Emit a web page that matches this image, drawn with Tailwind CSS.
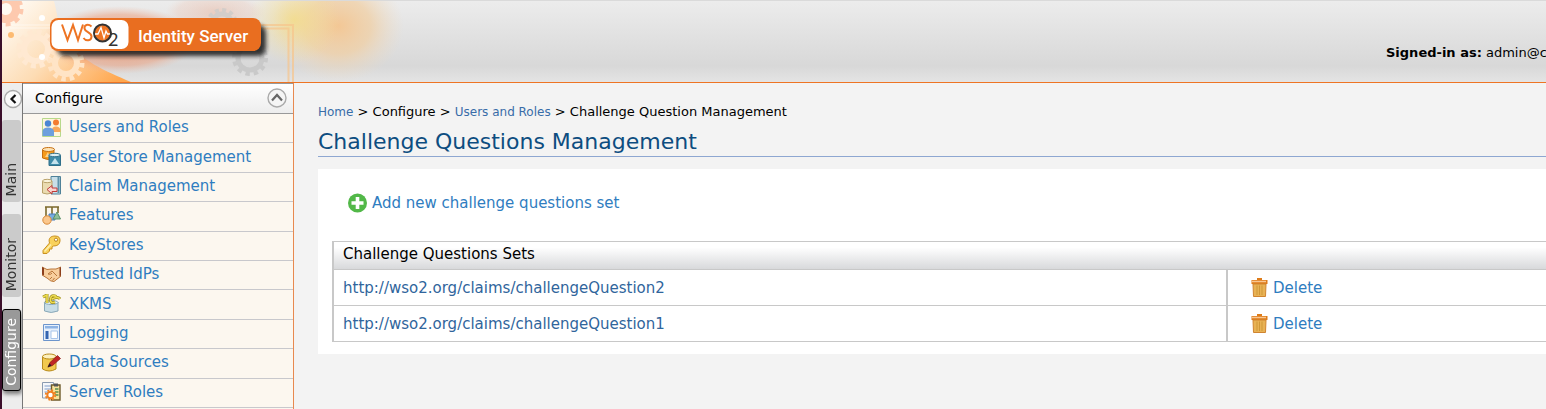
<!DOCTYPE html>
<html lang="en">
<head>
<meta charset="utf-8">
<title>WSO2 Identity Server</title>
<script src="https://cdn.jsdelivr.net/npm/@tailwindcss/browser@4"></script>
</head>
<body class="flex h-screen flex-col overflow-hidden border-l-2 border-[#3b0f2b] bg-[#f3f3f3] font-['DejaVu_Sans',sans-serif] text-sm text-black">

<header class="relative flex h-[83px] shrink-0 items-center overflow-hidden border-t border-b border-t-[#dadada] border-b-[#ee7423] bg-linear-to-b from-[#ececec] via-[#d8d8d8] via-80% to-[#e4e4e4]">
  <svg class="absolute left-0 top-0" width="420" height="82" viewBox="2 1 420 82" aria-hidden="true">
    <defs>
      <linearGradient id="swoosh" x1="0" x2="1" y1="0.2" y2="0.8">
        <stop offset="0" stop-color="#fffaf3"/><stop offset=".5" stop-color="#fddcb4"/><stop offset="1" stop-color="#ffa850"/>
      </linearGradient>
      <radialGradient id="yellow"><stop offset="0" stop-color="#f4dc84" stop-opacity=".8"/><stop offset="1" stop-color="#f4dc94" stop-opacity="0"/></radialGradient>
      <radialGradient id="peach"><stop offset="0" stop-color="#f3c795"/><stop offset=".5" stop-color="#f0cfa4" stop-opacity=".75"/><stop offset="1" stop-color="#eedcc4" stop-opacity="0"/></radialGradient>
      <radialGradient id="glow"><stop offset="0" stop-color="#e87848" stop-opacity=".8"/><stop offset=".75" stop-color="#ee9c78" stop-opacity=".5"/><stop offset="1" stop-color="#f0b8a0" stop-opacity="0"/></radialGradient>
      <filter id="soft" x="-10%" y="-50%" width="120%" height="200%"><feGaussianBlur stdDeviation="2"/></filter>
    </defs>
    <path d="M2 1H54C58 16 58 28 66 40C80 60 105 71 131 82H2Z" fill="url(#swoosh)"/>
    <ellipse cx="215" cy="12" rx="50" ry="20" fill="url(#glow)" opacity=".3"/>
    <ellipse cx="338" cy="26" rx="66" ry="56" fill="url(#peach)"/>
    <ellipse cx="294" cy="20" rx="46" ry="44" fill="url(#yellow)"/>
    <ellipse cx="120" cy="40" rx="78" ry="34" fill="url(#glow)"/>
    <g fill="none">
      <circle cx="6" cy="9" r="10" stroke="#fdc9ae" stroke-width="8"/>
      <circle cx="6" cy="9" r="15" stroke="#fdc9ae" stroke-width="5" stroke-dasharray="5 4.4"/>
      <circle cx="36" cy="49" r="12" stroke="#ffe9d2" stroke-width="6"/>
      <circle cx="36" cy="49" r="17" stroke="#ffe9d2" stroke-width="5" stroke-dasharray="5 3.9"/>
      <circle cx="66" cy="63" r="11" stroke="#ffe4c6" stroke-width="6"/>
      <circle cx="66" cy="63" r="16" stroke="#ffe4c6" stroke-width="5" stroke-dasharray="4.4 4"/>
      <circle cx="222" cy="24" r="10" stroke="#d3cdc9" stroke-width="5"/>
      <circle cx="222" cy="24" r="14" stroke="#d3cdc9" stroke-width="4" stroke-dasharray="4 3.3"/>
      <circle cx="250" cy="58" r="12" stroke="#c9c9c9" stroke-width="5"/>
      <circle cx="250" cy="58" r="16" stroke="#c9c9c9" stroke-width="4" stroke-dasharray="4.4 4"/>
      <path d="M255 25H293V82M255 28.500H288.500V82" stroke="#f6c48c" stroke-opacity=".7" stroke-width="2"/>
      <path d="M10 25H50M10 28H50" stroke="#fff" stroke-opacity=".5"/>
    </g>
    <circle cx="11" cy="35" r="3" fill="#fdbb72"/>
    <circle cx="42" cy="18" r="3" fill="#fff"/>
    <circle cx="42" cy="57" r="3" fill="#fff"/>
    <rect x="57" y="25" width="209" height="31" rx="8" fill="#222" opacity=".9" filter="url(#soft)"/>
    <rect x="50" y="18" width="211" height="33" rx="8" fill="#e96e20"/>
    <rect x="51.500" y="20" width="77" height="29" rx="7" fill="#fff"/>
    <path d="M62 24.500L67.500 40L73 25L78 40L83 24.500" fill="none" stroke="#ee7423" stroke-width="2"/>
    <path d="M91.500 26.500C88 23.500 84 25 84.500 28.500C85 32.500 91.500 32 91.500 36.500C91.500 41 86 41.500 83.500 38" fill="none" stroke="#ee7423" stroke-width="2"/>
    <circle cx="102.500" cy="33" r="8.500" fill="#ee7423" stroke="#333" stroke-width="2"/>
    <path d="M95 34H98L101 27.500L104 38L106 31L107.500 34H110" fill="none" stroke="#fff" stroke-width="1.300"/>
    <text x="108" y="46" font-family="Lato, sans-serif" font-size="18" fill="#333">2</text>
    <text x="138" y="42" font-family="Roboto, sans-serif" font-weight="500" font-size="17" fill="#fff">Identity Server</text>
  </svg>
  <p class="ml-auto mt-6 w-40 shrink-0 overflow-hidden whitespace-nowrap text-[13px]"><b>Signed-in as:</b> admin@c</p>
</header>

<div class="flex min-h-0 flex-1">
  <nav class="flex w-5 shrink-0 flex-col items-start bg-[#ededed] pt-[6px]" aria-label="Sections">
    <button aria-label="Collapse menu">
      <svg class="block" width="20" height="20" viewBox="0 0 20 20"><circle cx="11" cy="10" r="8.500" fill="#fafafa" stroke="#aaa" stroke-width="1.400"/><path d="M13.500 6L9.500 10L13.500 14" fill="none" stroke="#111" stroke-width="2.200"/></svg>
    </button>
    <button class="mt-[11px] flex h-[82px] w-[19px] items-center justify-end rounded-[3px] bg-[#cbcbcb] pb-[6px] text-[#333] [writing-mode:vertical-rl]"><span class="block rotate-180 leading-[17px]">Main</span></button>
    <button class="mt-3 flex h-[83px] w-[19px] items-center justify-end rounded-[3px] bg-[#cbcbcb] pb-[6px] text-[#333] [writing-mode:vertical-rl]"><span class="block rotate-180 leading-[17px]">Monitor</span></button>
    <button class="mt-3 flex h-[82px] w-[19px] items-center justify-end rounded-[3px] border border-black bg-[#999] pb-1 text-white shadow-[1px_3px_4px_#777] [writing-mode:vertical-rl]"><span class="block rotate-180 leading-[17px]">Configure</span></button>
  </nav>

  <aside class="w-[272px] shrink-0 border-l border-r border-l-[#777] border-r-[#e8894f] bg-[#fcf7ef]">
    <div class="flex h-[31px] items-center justify-between border-t border-b border-t-[#999] border-b-[#999] bg-linear-to-b from-white to-[#ededed] pr-[6px] pb-px pl-3">
      <h2>Configure</h2>
      <button aria-label="Collapse Configure">
        <svg class="block" width="20" height="20" viewBox="0 0 20 20"><circle cx="10" cy="10" r="9" fill="#f5f5f5" stroke="#aaa" stroke-width="1.400"/><path d="M5 12.500L10 7L15 12.500" fill="none" stroke="#666" stroke-width="2.200"/></svg>
      </button>
    </div>
    <ul class="grid h-[294px] auto-rows-fr text-[15px] leading-5 text-[#2f7dc0] *:flex *:items-center *:gap-2 *:border-b *:border-[#c8c8cc] *:pb-[2px] *:pl-[19px]">
      <li>
        <svg width="19" height="19" viewBox="0 0 19 19"><path d="M.5.500H18.500V18.500H.5Z" fill="#fdf6dc" stroke="#b7d98b"/><circle cx="14" cy="4.500" r="3" fill="#f47c30"/><path d="M10 12Q10 8.500 14 8.500T18.500 12V14H10Z" fill="#f9a95c"/><circle cx="6" cy="5.500" r="3.200" fill="#4a86d4"/><path d="M.5 18V13Q1 9.500 6 9.500T12 13V18Z" fill="#6d9fdd"/></svg>
        <a href="#">Users and Roles</a></li>
      <li>
        <svg width="19" height="20" viewBox="0 0 19 20"><path d="M.5 2.500V11Q6 14 12 11V2.500" fill="#f59a1b" stroke="#c66f10"/><ellipse cx="6.500" cy="2.500" rx="6" ry="2" fill="#fde3b5" stroke="#c66f10"/><path d="M3 10L6 5L8 10Z" fill="#fdd28a"/><path d="M7 8V18.500H18.500V8" fill="#3f8ba8" stroke="#2f6f8a"/><ellipse cx="12.700" cy="8" rx="5.800" ry="1.700" fill="#dceef4" stroke="#2f6f8a"/><path d="M9 17L13 11L17 17Z" fill="#c4e2ec"/></svg>
        <a href="#">User Store Management</a></li>
      <li>
        <svg width="19" height="19" viewBox="0 0 19 19"><path d="M9 .5H18.500V18H9Z" fill="#c9dfe8" stroke="#4f8198"/><path d="M16.500 1V17" stroke="#5d93ab" stroke-width="2"/><path d="M.5 5V17Q5 19 10 17V5" fill="#eadbb0" stroke="#b9a26a"/><ellipse cx="5.200" cy="5" rx="4.700" ry="1.700" fill="#faf3da" stroke="#b9a26a"/><path d="M5 13.500L10 9.500V12H15V15.500H10V18Z" fill="#fbd5d0" stroke="#c03a3a"/></svg>
        <a href="#">Claim Management</a></li>
      <li>
        <svg width="19" height="19" viewBox="0 0 19 19"><path d="M4 11V1H16V7M10 1V8M3 1H17" fill="none" stroke="#7c6a2c" stroke-width="1.600"/><path d="M7 8H13V14H7Z" fill="#78ace0" stroke="#4a7fc0"/><path d="M11 13L15 6L18.500 13Z" fill="#8fbf9a" stroke="#5b9068"/><circle cx="5" cy="14" r="4.200" fill="#fbc78c" stroke="#d78a3a"/></svg>
        <a href="#">Features</a></li>
      <li>
        <svg width="19" height="19" viewBox="0 0 19 19"><path d="M7.500 8C6 3 9 1 13 1Q18.500 1 18 6Q17.500 11 11.500 11L10 12V14H7.500V16L5 18.500H1V15.500Z" fill="#f9d25c" stroke="#c99020"/><path d="M2.500 16.500L9 9.500" stroke="#fdf0b0" stroke-width="1.400"/><circle cx="14" cy="4.700" r="1.600" fill="#fff" stroke="#b98218"/></svg>
        <a href="#">KeyStores</a></li>
      <li>
        <svg width="19" height="17" viewBox="0 0 19 17"><path d="M0 1L5 3.500L9 3L14 3L19 1V10L12 15.500Q9 16 5 12L0 9Z" fill="#f8cf9e" stroke="#b9763a"/><path d="M0 1L2 2V9.500L0 8.500ZM19 1L17.500 2V10.500L19 9.500Z" fill="#8c3f1c"/><path d="M6 8L10 5L15 10M6 8Q9 9 10 7M8 13L10 11M10.500 14.500L12.500 12" fill="none" stroke="#b9763a"/></svg>
        <a href="#">Trusted IdPs</a></li>
      <li>
        <svg width="19" height="19" viewBox="0 0 19 19"><path d="M2.500 8V17Q9 20 16 17V8" fill="#c8dde6" stroke="#8aa9b8"/><ellipse cx="9.200" cy="8.500" rx="6.800" ry="2" fill="#e9f3f7" stroke="#8aa9b8"/><path d="M1 3L5 1V9M14.500 2.500Q9 0 8.500 5T13 8M10 5Q16 2 18 5" fill="none" stroke="#9a8a1c" stroke-width="3"/><path d="M1 3L5 1V9M14.500 2.500Q9 0 8.500 5T13 8M10 5Q16 2 18 5" fill="none" stroke="#eedc50" stroke-width="1.600"/></svg>
        <a href="#">XKMS</a></li>
      <li>
        <svg width="19" height="17" viewBox="0 0 19 17"><path d="M1.500.5H17.500V16.500H1.500Z" fill="#e6f0fb" stroke="#6d95cc"/><path d="M3 2H16V4.500H3Z" fill="#8db3e4"/><path d="M3.500 7H6.500V15H3.500Z" fill="#3465b0"/><path d="M9 7H15.500V14.500H9Z" fill="#fff" stroke="#a9c5ea"/></svg>
        <a href="#">Logging</a></li>
      <li>
        <svg width="19" height="19" viewBox="0 0 19 19"><path d="M.5 3.500V16Q7 20 14 16V3.500" fill="#f2c94e" stroke="#b98b1c"/><ellipse cx="7.300" cy="3.500" rx="6.800" ry="2.500" fill="#fdf0bd" stroke="#b98b1c"/><path d="M6 14L8 9.500L15.500 2.500L18.500 5.500L10.500 12.500Z" fill="#c02626" stroke="#8a1616" stroke-width=".7"/><path d="M5.500 14.500L7.500 10.500L9.500 12.500Z" fill="#222"/></svg>
        <a href="#">Data Sources</a></li>
      <li>
        <svg width="19" height="19" viewBox="0 0 19 19"><path d="M.5.500H11.500V16H.5Z" fill="#f5f7fa" stroke="#8b9bb0"/><path d="M2.500 4H9M2.500 7H9M2.500 10H6" stroke="#7f9cc8" stroke-width="1.200"/><path d="M9.500 3H18V18H9.500Z" fill="#f7e29a" stroke="#6e5a2a" stroke-width="1.400"/><path d="M12 1.500H16V4.500H12Z" fill="#555"/><path d="M13 7H16.500M13 10H16.500M13 13H16.500" stroke="#5b8f4e" stroke-width="1.500"/><circle cx="8.500" cy="13" r="3.200" fill="#fff" stroke="#f08022" stroke-width="2"/><circle cx="8.500" cy="13" r="4.800" fill="none" stroke="#f08022" stroke-width="1.800" stroke-dasharray="2 1.770"/></svg>
        <a href="#">Server Roles</a></li>
    </ul>
  </aside>

  <main class="min-w-0 flex-1 overflow-hidden pt-[19px] pl-6">
    <nav class="text-[13px] leading-5" aria-label="Breadcrumb"><a class="text-xs text-[#386ca8]" href="#">Home</a> &gt; Configure &gt; <a class="text-xs text-[#386ca8]" href="#">Users and Roles</a> &gt; Challenge Question Management</nav>
    <h1 class="mb-3 h-[35px] border-b border-[#8ea7d1] pt-[5px] text-[22px] leading-[30px] text-[#0d4d80]">Challenge Questions Management</h1>
    <section class="bg-white pt-6 pb-3 pl-[14px] text-[15px] leading-5">
      <a href="#" class="ml-4 flex items-center gap-[5px] text-[#2f7dc0]">
        <svg width="19" height="20" viewBox="0 0 19 20"><circle cx="9.500" cy="10" r="9.500" fill="#52b848"/><path d="M9.500 4V16M3.500 10H15.500" stroke="#fff" stroke-width="3.600"/></svg>
        Add new challenge questions set</a>
      <table class="mt-7 w-full border-collapse border-t border-l-2 border-[#c8c8c8]">
        <thead><tr class="h-7 border-b border-[#c8c8c8] bg-linear-to-b from-white from-20% to-[#d8d9db]">
          <th colspan="2" class="pb-1 pl-[9px] text-left font-normal">Challenge Questions Sets</th></tr></thead>
        <tbody class="[&_td]:h-9 [&_td]:border-b [&_td]:border-[#c8c8c8]">
          <tr><td class="w-[73.7%] border-r-2 pl-[9px] text-[#30659c]">http://wso2.org/claims/challengeQuestion2</td>
            <td class="pl-[23px]"><a href="#" class="flex items-center gap-[5px] text-[#2f7dc0]"><svg width="17" height="19" viewBox="0 0 17 19"><path d="M6 0H11V2H16.500V6H.5V2H6Z" fill="#de7c1a"/><path d="M1 3.500H15" stroke="#f8c690" stroke-width="1.500"/><path d="M2 6H15L14.500 18.500H2.500Z" fill="#e8b254" stroke="#d08430"/><path d="M6 7.500V17M8.500 7.500V17M11 7.500V17" stroke="#cf9838"/></svg>Delete</a></td></tr>
          <tr><td class="border-r-2 pl-[9px] text-[#30659c]">http://wso2.org/claims/challengeQuestion1</td>
            <td class="pl-[23px]"><a href="#" class="flex items-center gap-[5px] text-[#2f7dc0]"><svg width="17" height="19" viewBox="0 0 17 19"><path d="M6 0H11V2H16.500V6H.5V2H6Z" fill="#de7c1a"/><path d="M1 3.500H15" stroke="#f8c690" stroke-width="1.500"/><path d="M2 6H15L14.500 18.500H2.500Z" fill="#e8b254" stroke="#d08430"/><path d="M6 7.500V17M8.500 7.500V17M11 7.500V17" stroke="#cf9838"/></svg>Delete</a></td></tr>
        </tbody>
      </table>
    </section>
  </main>
</div>
</body>
</html>
